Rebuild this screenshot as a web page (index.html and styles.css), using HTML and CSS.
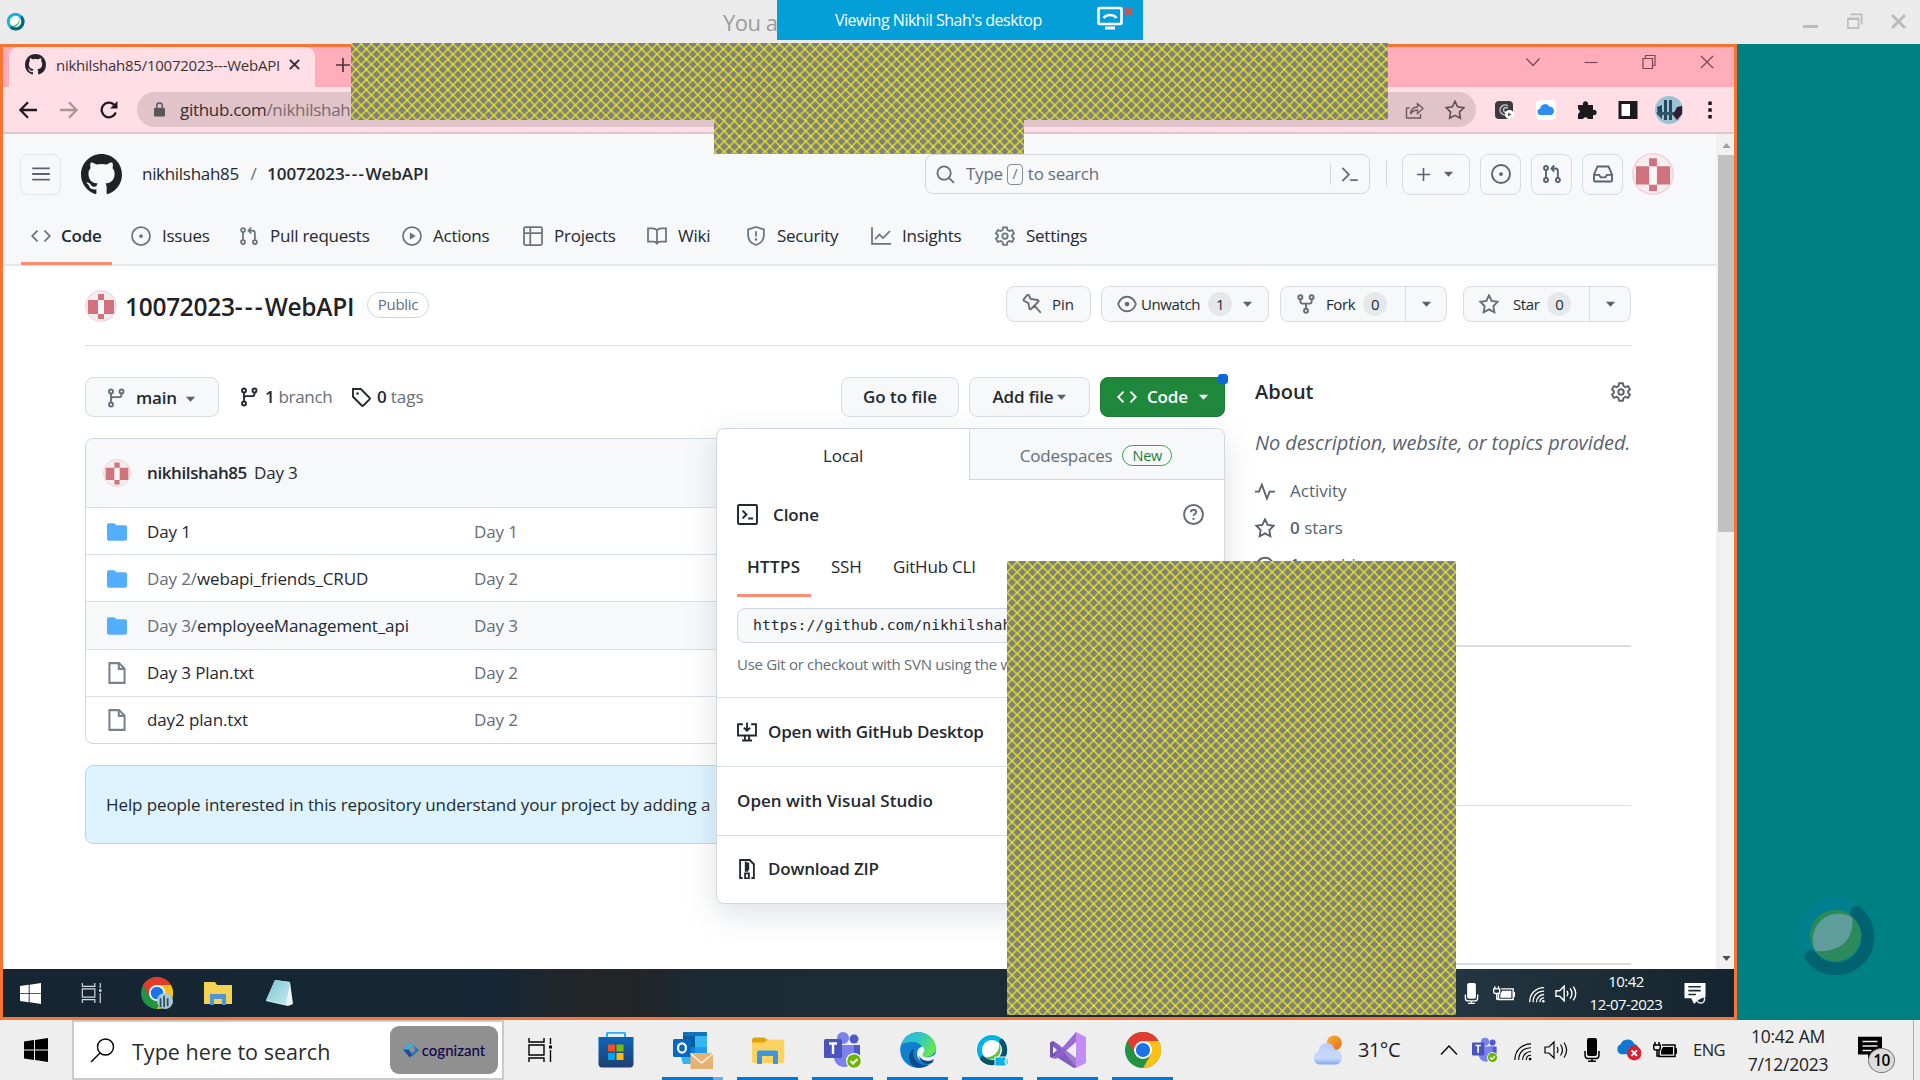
FILE: index.html
```html
<!DOCTYPE html>
<html lang="en">
<head>
<meta charset="utf-8">
<title>Viewing Nikhil Shah's desktop</title>
<link rel="stylesheet" href="styles.css">
</head>
<body>
<svg class="defs" width="0" height="0" aria-hidden="true">
  <defs>
    <pattern id="mesh" x="0" y="1" width="10.2" height="10.2" patternUnits="userSpaceOnUse"><rect width="10.2" height="10.2" fill="#808080"/><path d="M-1-1 11.2 11.2" stroke="#ff0" stroke-opacity=".78" stroke-width="1.45"/><path d="M11.2-1-1 11.2" stroke="#ff0" stroke-opacity=".78" stroke-width="1.45"/></pattern>
    <clipPath id="round"><circle cx="16" cy="16" r="15.5"/></clipPath>
    <linearGradient id="store" x1="0" y1="0" x2="0" y2="1"><stop offset="0" stop-color="#0b66b8"/><stop offset="1" stop-color="#203f72"/></linearGradient>
    <linearGradient id="edge1" x1="0" y1="0" x2="1" y2="0.5"><stop offset="0" stop-color="#2fb4ee"/><stop offset=".55" stop-color="#30c8c0"/><stop offset="1" stop-color="#66e552"/></linearGradient>
    <linearGradient id="cloudg" x1="0" y1="0" x2="0" y2="1"><stop offset="0" stop-color="#b7cdf8"/><stop offset=".7" stop-color="#c9dafb"/><stop offset="1" stop-color="#7fa8ee"/></linearGradient>
    <linearGradient id="sung" x1="0" y1="0" x2="1" y2="1"><stop offset="0" stop-color="#f7b42a"/><stop offset="1" stop-color="#ea6a1c"/></linearGradient>
    <linearGradient id="noteg" x1="0" y1="0" x2="1" y2="1"><stop offset="0" stop-color="#7fc3cf"/><stop offset="1" stop-color="#c4ecf2"/></linearGradient>
  </defs>
  <symbol id="mark" viewBox="0 0 16 16"><path fill="currentColor" d="M8 0c4.42 0 8 3.58 8 8a8.013 8.013 0 0 1-5.45 7.59c-.4.08-.55-.17-.55-.38 0-.27.01-1.13.01-2.2 0-.75-.25-1.23-.54-1.48 1.78-.2 3.65-.88 3.65-3.95 0-.88-.31-1.59-.82-2.15.08-.2.36-1.02-.08-2.12 0 0-.67-.22-2.2.82-.64-.18-1.32-.27-2-.27-.68 0-1.36.09-2 .27-1.53-1.03-2.2-.82-2.2-.82-.44 1.1-.16 1.92-.08 2.12-.51.56-.82 1.28-.82 2.15 0 3.06 1.86 3.75 3.64 3.95-.23.2-.44.55-.51 1.07-.46.21-1.61.55-2.33-.66-.15-.24-.6-.83-1.23-.82-.67.01-.27.38.01.53.34.19.73.9.82 1.13.16.45.68 1.31 2.69.94 0 .67.01 1.3.01 1.49 0 .21-.15.45-.55.38A7.995 7.995 0 0 1 0 8c0-4.42 3.58-8 8-8Z"/></symbol>
  <symbol id="menu" viewBox="0 0 16 16"><path d="M1 3.500h14M1 8h14M1 12.500h14"/></symbol>
  <symbol id="code" viewBox="0 0 16 16"><path d="M10.800 3.700 15 8l-4.200 4.300M5.200 3.700 1 8l4.200 4.300"/></symbol>
  <symbol id="issue" viewBox="0 0 16 16"><circle cx="8" cy="8" r="7.200"/><circle cx="8" cy="8" r="1.500" fill="currentColor" stroke="none"/></symbol>
  <symbol id="pr" viewBox="0 0 16 16"><circle cx="3.200" cy="3.200" r="1.600"/><circle cx="3.200" cy="12.800" r="1.600"/><circle cx="12.700" cy="12.800" r="1.600"/><path d="M3.200 5v6M12.700 11V5.600c0-1.200-.8-2-2-2H8M9.800 1.200 7.500 3.600l2.300 2.400"/></symbol>
  <symbol id="play" viewBox="0 0 16 16"><circle cx="8" cy="8" r="7.200"/><path d="M6.300 5.100 11 8l-4.700 2.900z" fill="currentColor" stroke="none"/></symbol>
  <symbol id="proj" viewBox="0 0 16 16"><rect x=".8" y=".8" width="14.400" height="14.400" rx="1.200"/><path d="M.8 5.600h14.400M5.800.8v14.400"/></symbol>
  <symbol id="wiki" viewBox="0 0 16 16"><path d="M8 3.400C7.200 2.300 6 1.800 4.600 1.800H.8v10.600h4.400c1.200 0 2.100.5 2.800 1.600.7-1.100 1.600-1.600 2.800-1.600h4.400V1.800h-3.800C10 1.800 8.800 2.300 8 3.400V13"/></symbol>
  <symbol id="shield" viewBox="0 0 16 16"><path d="m8 .8 6.300 2v4.500c0 4-2.500 6.500-6.300 7.900C4.200 13.800 1.700 11.300 1.700 7.300V2.800zM8 4.200v4.200"/><circle cx="8" cy="10.800" r="1" fill="currentColor" stroke="none"/></symbol>
  <symbol id="graph" viewBox="0 0 16 16"><path d="M.8 1v13.200H16M3.300 10.600 6.700 6.800l2.900 2.900L15.200 4"/></symbol>
  <symbol id="gear" viewBox="0 0 16 16"><path d="M6.500 1h3l.5 2.200 1.500.9 2.200-.8 1.500 2.600L13.600 7.400v1.200l1.600 1.500-1.500 2.600-2.200-.8-1.500.9L9.500 15h-3L6 12.800l-1.500-.9-2.200.8L.8 10.100l1.600-1.500V7.400L.8 5.900l1.500-2.600 2.200.8L6 3.200z"/><circle cx="8" cy="8" r="2.200"/></symbol>
  <symbol id="search" viewBox="0 0 16 16"><circle cx="6.800" cy="6.800" r="5.600"/><path d="m10.900 10.900 4.200 4.200"/></symbol>
  <symbol id="cmd" viewBox="0 0 16 16"><path d="M2 2.500 7.500 8 2 13.500M8.500 12.800H15"/></symbol>
  <symbol id="plus" viewBox="0 0 16 16"><path d="M8 1.800v12.400M1.800 8h12.400"/></symbol>
  <symbol id="caret" viewBox="0 0 12 8"><path d="M1 1.500h10L6 7z" fill="currentColor" stroke="none"/></symbol>
  <symbol id="inbox" viewBox="0 0 16 16"><path d="M3.600 2h8.800l2.800 6.500V13c0 .6-.4 1-1 1H1.800c-.6 0-1-.4-1-1V8.500zM.8 8.700h4l1.400 2h3.600l1.400-2h4"/></symbol>
  <symbol id="branch" viewBox="0 0 16 16"><circle cx="4" cy="2.800" r="1.600"/><circle cx="4" cy="13.200" r="1.600"/><circle cx="12.400" cy="2.800" r="1.600"/><path d="M4 4.500v7M4 9c0-1.200 1-1.700 2-1.700h4.400c1.200 0 2-.8 2-2v-.8"/></symbol>
  <symbol id="fork" viewBox="0 0 16 16"><circle cx="3.500" cy="2.600" r="1.600"/><circle cx="12.500" cy="2.600" r="1.600"/><circle cx="8" cy="13.400" r="1.600"/><path d="M3.500 4.200V6c0 1 .7 1.700 1.700 1.700h5.600c1 0 1.700-.7 1.700-1.700V4.200M8 7.700v4"/></symbol>
  <symbol id="tag" viewBox="0 0 16 16"><path d="M1.600 1.600h6.200l7 7c.4.400.4.900 0 1.300l-4.900 4.900c-.4.400-.9.400-1.300 0l-7-7z"/><circle cx="5.200" cy="5.200" r="1" fill="currentColor" stroke="none"/></symbol>
  <symbol id="star" viewBox="0 0 16 16"><path d="m8 1 2.100 4.500 4.900.7-3.500 3.500.8 4.900L8 12.300l-4.300 2.300.8-4.900L1 6.200l4.900-.7z"/></symbol>
  <symbol id="pin" viewBox="0 0 16 16"><path d="m5.400.9 1.500 3 5.600.9c.8.200 1 .9.500 1.400L7.300 12c-.6.500-1.300.2-1.400-.5l-.8-4.200-3.600-1.900c-.5-.3-.5-.8-.1-1.200L4.200.8c.4-.4.900-.4 1.200.1zM10 9.300l5 5.700"/></symbol>
  <symbol id="eye" viewBox="0 0 16 16"><path d="M.9 8c1.300-3.600 4-5.800 7.100-5.800s5.800 2.200 7.100 5.800c-1.300 3.600-4 5.800-7.100 5.800S2.200 11.600.9 8z"/><circle cx="8" cy="8" r="1.900" fill="currentColor" stroke="none"/></symbol>
  <symbol id="folder" viewBox="0 0 16 16"><path fill="#54aeff" d="M1.600 1h3.800c.5 0 .9.200 1.200.6l.9 1h6.900c.9 0 1.600.7 1.600 1.600v9.200c0 .9-.7 1.600-1.600 1.600H1.600C.7 15 0 14.300 0 13.400V2.600C0 1.700.7 1 1.600 1z"/></symbol>
  <symbol id="file" viewBox="0 0 16 16"><path d="M2.500.8h7l4 4v10.400h-11zM9.300 1v4h4"/></symbol>
  <symbol id="term" viewBox="0 0 16 16"><rect x=".8" y=".8" width="14.400" height="14.400" rx=".8"/><path d="m4.300 5 2.900 3-2.900 3M8.500 11h3.800"/></symbol>
  <symbol id="help" viewBox="0 0 16 16"><circle cx="8" cy="8" r="7.200"/><path d="M6 6.300c.1-1.200 1-1.900 2-1.900 1.200 0 2 .8 2 1.800 0 1.300-2 1.500-2 2.800"/><circle cx="8" cy="11.300" r=".9" fill="currentColor" stroke="none"/></symbol>
  <symbol id="desk" viewBox="0 0 16 16"><path d="M4.700 1.800H.8v9h14.400v-9h-3.900M8 .3v6.400M5.500 4.600 8 7l2.500-2.400M6.300 11v3.500M9.700 11v3.500M4 14.800h8"/></symbol>
  <symbol id="zip" viewBox="0 0 16 16"><path d="M4.500 15.200h-2V.8h7.600l3.400 3.400v11h-2"/><path d="M7 2v1.500h2V5H7v1.500h2V8H7v1.500h2M6.500 15.500v-4h3v4z"/></symbol>
  <symbol id="pulse" viewBox="0 0 16 16"><path d="M0 8.500h3.200L5.500 3l4 11 2.300-5.500H16"/></symbol>
  <symbol id="avatar" viewBox="0 0 32 32"><g clip-path="url(#round)"><rect width="32" height="32" fill="#f5eef0"/><path d="M13 4h6v6h-6zM3 10h10v14H3zM19 10h10v14H19zM13 24h6v5h-6z" fill="#d0737c"/><path d="M13.500 11h5v13h-5z" fill="#f8f6f7"/></g><circle cx="16" cy="16" r="15.400" fill="none" stroke="#f3ccd2" stroke-width="1"/></symbol>
  <symbol id="winflag" viewBox="0 0 24 24"><path fill="currentColor" d="M0 3.400 10 2v9.400H0zM11 1.900 24 0v11.400H11zM0 12.400h10V22L0 20.600zM11 12.400h13V24l-13-1.900z"/></symbol>
  <symbol id="taskview" viewBox="0 0 24 24"><path d="M1 0v4h15V0M1 24v-4h15v4M1 7h15v10H1zM22.500 0v6M22.500 12v12" fill="none" stroke="currentColor" stroke-width="1.400"/><path d="M21 7.500h3v3h-3z" fill="currentColor"/></symbol>
  <symbol id="wifi" viewBox="0 0 20 20"><path d="M2 19C2 9 9 2 19 2M6 19c0-8 5-13 13-13M10 19c0-5 4-9 9-9M14 19c0-3 2-5 5-5"/><circle cx="18" cy="18" r="1.500" fill="currentColor" stroke="none"/></symbol>
  <symbol id="sound" viewBox="0 0 24 20"><path d="M1 7v6h4l5 5V2L5 7zM13 7c1.300 2 1.300 4 0 6M16.500 4.500c2.500 3.500 2.500 7.500 0 11M20 2.500c3.500 5 3.500 10 0 15"/></symbol>
  <symbol id="mic" viewBox="0 0 16 24"><rect x="3" y="0" width="10" height="18" rx="2" fill="currentColor" stroke="none"/><path d="M1 13v4c0 2 1 3.500 3 3.500h8c2 0 3-1.500 3-3.500v-4M8 20v3M4 23.300h8"/></symbol>
  <symbol id="battery" viewBox="0 0 24 18"><path d="M6 9v6.500h16V4H9M22 8h1.500v4H22M2 1v3M6 1v3M.7 4h6.600v3c0 1-1 2-2 2H3C1.700 9 .7 8 .7 7zM4 9v6h3"/><path d="M10 6h10v7.500H8V9.500z" fill="currentColor" stroke="none"/></symbol>
  <symbol id="note" viewBox="0 0 24 24"><path fill="currentColor" d="M0 0h24v18h-9l-5 6v-6H0z"/></symbol>
  <symbol id="chrome" viewBox="0 0 36 36"><circle cx="18" cy="18" r="18" fill="#229342"/><path fill="#fbc116" d="M18 36A18 18 0 0 0 33.600 9H18l7.800 13.500z"/><path fill="#e33b2e" d="M33.600 9A18 18 0 0 0 2.400 9l7.800 13.500L18 9z"/><circle cx="18" cy="18" r="9" fill="#fff"/><circle cx="18" cy="18" r="7.100" fill="#1a73e8"/></symbol>
  <symbol id="teams" viewBox="0 0 38 38"><circle cx="19" cy="7" r="6" fill="#7b83eb"/><circle cx="30" cy="8" r="4.500" fill="#5059c9"/><path fill="#5059c9" d="M25 14h11v10c0 5-5 7-9 6z"/><path fill="#7b83eb" d="M10 14h20v12c0 7-5 10-10 10S10 32 10 26z"/><rect y="8" width="18" height="19" rx="1.500" fill="#4b53bc"/><path d="M5 12.500h8M9 12.500V23" stroke="#fff" stroke-width="2.400"/><circle cx="30" cy="30" r="8" fill="#fff"/><circle cx="30" cy="30" r="6.800" fill="#6bb700"/><path d="m26.500 30 2.500 2.500 4.500-4.500" fill="none" stroke="#fff" stroke-width="2"/></symbol>
</svg>

<header class="titlebar">
  <svg class="webex-mini" viewBox="0 0 20 20"><circle cx="10" cy="10" r="7.600" fill="#fff" stroke="#18b4df" stroke-width="3.200"/><path d="M13.500 5.500c1 6-3 9-8 9 5 4 11-3 8-9z" fill="#6cbf4b"/><path d="M15.800 5A7.600 7.600 0 0 1 5 15.700" fill="none" stroke="#07637e" stroke-width="3.200"/></svg>
  <span class="you">You a</span>
  <div class="winctl">
    <svg viewBox="0 0 16 20"><path d="M0 15.500h15" stroke-width="3"/></svg>
    <svg viewBox="0 0 18 20"><path d="M1 7h12v11H1zM1 8h12" stroke-width="1.800"/><path d="M4 2.500h12.500V14" stroke-width="2"/></svg>
    <svg viewBox="0 0 16 20"><path d="m1 4 13 13M14 4 1 17" stroke-width="3"/></svg>
  </div>
</header>

<main class="stage">
  <section class="share">
    <div class="tabstrip">
      <div class="tab"><svg class="fav"><use href="#mark"/></svg><span class="tabname">nikhilshah85/10072023---WebAPI</span><svg class="ic tabx" viewBox="0 0 10 10"><path d="m.8.8 8.400 8.400M9.200.8.800 9.200"/></svg></div>
      <svg class="ic newtab" viewBox="0 0 16 16"><path d="M8 1v14M1 8h14"/></svg>
      <div class="chromectl">
        <svg viewBox="0 0 14 14"><path d="m.5 3.500 6.500 7 6.500-7"/></svg>
        <svg viewBox="0 0 14 14"><path d="M.5 7.500h13"/></svg>
        <svg viewBox="0 0 14 14"><path d="M1 3.500h9.500v10H1zM3.500 3.500v-3H13v10h-2.500"/></svg>
        <svg viewBox="0 0 14 14"><path d="m1 1 12 12M13 1 1 13"/></svg>
      </div>
    </div>
    <div class="toolbar">
      <svg class="ic t1" viewBox="0 0 18 18"><path d="M18 9H1.500M9 1.200 1.400 9 9 16.800"/></svg>
      <svg class="ic t2" viewBox="0 0 18 18"><path d="M0 9h16.500M9 1.200 16.600 9 9 16.800"/></svg>
      <svg class="ic t3" viewBox="0 0 18 18"><path d="M15.800 11.500A7.300 7.300 0 1 1 14 3.700l2 2"/><path d="M17.500 0v7.500H10z" fill="currentColor" stroke="none"/></svg>
      <div class="omni">
        <svg class="lock" viewBox="0 0 12 16"><rect y="6" width="12" height="9.500" rx="1" fill="#5b5458"/><path d="M3 6V4a3 3 0 0 1 6 0v2" fill="none" stroke="#5b5458" stroke-width="1.600"/></svg>
        <span class="url">github.com<i>/nikhilshah</i></span>
        <svg class="ic share-ic" viewBox="0 0 18 18"><path d="M4 7H1v10h14v-4M5 13c.5-5 3-7 7-7V2.500l5.500 5-5.500 5V9C9 9 7 10 5 13z"/></svg>
        <svg class="ic star-ic"><use href="#star"/></svg>
      </div>
      <div class="exts">
        <svg viewBox="0 0 20 20"><rect x="0" y="1" width="18" height="18" rx="4" fill="#3b3a3c"/><path d="M13 6a5 5 0 1 0 0 8M13 8.500a2.500 2.500 0 1 0 0 3" fill="none" stroke="#c9c2c5" stroke-width="1.500"/><circle cx="14.500" cy="14.500" r="4.500" fill="#fff"/><path d="M13 12.500v4l3.500-2z" fill="#555"/></svg>
        <svg viewBox="0 0 20 20"><rect width="20" height="20" rx="4" fill="#fbfcff"/><path d="M4.500 15a3.300 3.300 0 0 1-.3-6.500 5 5 0 0 1 9.400-1.700A4.200 4.200 0 0 1 15 15z" fill="#2d8cf0"/></svg>
        <svg viewBox="0 0 20 20"><path d="M1 5h5a2.700 2.700 0 1 1 5 0h5v5a2.700 2.700 0 1 1 0 5v4h-5a2.700 2.700 0 0 0-5 0H1v-5a2.700 2.700 0 0 0 0-5z" fill="#1c1a1c"/></svg>
        <svg viewBox="0 0 20 20"><path d="M2 2.500h16v15H2z" fill="#fff" stroke="#1c1a1c" stroke-width="3"/><path d="M12 2h6v16h-6z" fill="#1c1a1c"/></svg>
        <svg class="person" viewBox="0 0 28 28"><circle cx="14" cy="14" r="14" fill="#9cc3d4"/><path d="M2 11 7 9v14l-4-4zM9 4h3v20H9zM14 4h3v20h-3z" fill="#26485e"/><path d="M1.500 16h20v3h-19z" fill="#31566b"/><path d="M27 10v8l-5 6-4-5 4-8z" fill="#351a30"/></svg>
        <svg viewBox="0 0 20 20"><path d="M8.300 1.500h3.500V5H8.300zM8.300 8.200h3.500v3.500H8.300zM8.300 15h3.500v3.500H8.300z" fill="#1c1a1c"/></svg>
      </div>
    </div>

    <div class="viewport">
      <div class="page">
        <div class="ghhead">
          <div class="globalbar">
            <span class="sq"><svg class="ic"><use href="#menu"/></svg></span>
            <svg class="logo"><use href="#mark"/></svg>
            <span class="owner">nikhilshah85</span><span class="slash">/</span><b class="reponame">10072023<i class="hy">---</i>WebAPI</b>
            <div class="searchbox"><svg class="ic"><use href="#search"/></svg><span>Type</span><kbd>/</kbd><span>to search</span><span class="cmdk"><svg class="ic"><use href="#cmd"/></svg></span></div>
            <span class="vbar"></span>
            <span class="sq wide"><svg class="ic small"><use href="#plus"/></svg><svg class="caret"><use href="#caret"/></svg></span>
            <span class="sq"><svg class="ic"><use href="#issue"/></svg></span>
            <span class="sq"><svg class="ic"><use href="#pr"/></svg></span>
            <span class="sq"><svg class="ic"><use href="#inbox"/></svg></span>
            <svg class="me"><use href="#avatar"/></svg>
          </div>
          <nav class="tabs">
            <a class="on"><svg class="ic"><use href="#code"/></svg>Code</a>
            <a><svg class="ic"><use href="#issue"/></svg>Issues</a>
            <a><svg class="ic"><use href="#pr"/></svg>Pull requests</a>
            <a><svg class="ic"><use href="#play"/></svg>Actions</a>
            <a><svg class="ic"><use href="#proj"/></svg>Projects</a>
            <a><svg class="ic"><use href="#wiki"/></svg>Wiki</a>
            <a><svg class="ic"><use href="#shield"/></svg>Security</a>
            <a><svg class="ic"><use href="#graph"/></svg>Insights</a>
            <a><svg class="ic"><use href="#gear"/></svg>Settings</a>
          </nav>
        </div>

        <div class="repo">
          <div class="titlerow">
            <svg class="ava"><use href="#avatar"/></svg><h1>10072023<i class="hy">---</i>WebAPI</h1><span class="pill">Public</span>
            <div class="social">
              <span class="btn pinb"><svg class="ic"><use href="#pin"/></svg>Pin</span>
              <span class="btn watch"><svg class="ic"><use href="#eye"/></svg>Unwatch<em>1</em><svg class="caret"><use href="#caret"/></svg></span>
              <span class="btn forkb"><svg class="ic"><use href="#fork"/></svg>Fork<em>0</em><u><svg class="caret"><use href="#caret"/></svg></u></span>
              <span class="btn starb"><svg class="ic"><use href="#star"/></svg>Star<em>0</em><u><svg class="caret"><use href="#caret"/></svg></u></span>
            </div>
          </div>
          <div class="cols">
            <div class="left">
              <div class="actions">
                <span class="btn mainb"><svg class="ic"><use href="#branch"/></svg>main<svg class="caret"><use href="#caret"/></svg></span>
                <span class="stat branches"><svg class="ic"><use href="#branch"/></svg><b>1</b>branch</span>
                <span class="stat tags"><svg class="ic"><use href="#tag"/></svg><b>0</b>tags</span>
                <div class="right">
                  <span class="btn gof">Go to file</span>
                  <span class="btn addf">Add file<svg class="caret"><use href="#caret"/></svg></span>
                  <span class="btn green"><svg class="ic"><use href="#code"/></svg>Code<svg class="caret"><use href="#caret"/></svg><i class="dot"></i></span>
                </div>
              </div>
              <div class="files">
                <div class="commit"><svg class="cav"><use href="#avatar"/></svg><b>nikhilshah85</b><span>Day 3</span></div>
                <div class="row"><svg><use href="#folder"/></svg><span>Day 1</span><span class="msg">Day 1</span></div>
                <div class="row"><svg><use href="#folder"/></svg><span><i>Day 2/</i>webapi_friends_CRUD</span><span class="msg">Day 2</span></div>
                <div class="row hov"><svg><use href="#folder"/></svg><span><i>Day 3/</i>employeeManagement_api</span><span class="msg">Day 3</span></div>
                <div class="row"><svg class="ic"><use href="#file"/></svg><span>Day 3 Plan.txt</span><span class="msg">Day 2</span></div>
                <div class="row"><svg class="ic"><use href="#file"/></svg><span>day2 plan.txt</span><span class="msg">Day 2</span></div>
              </div>
              <div class="help"><span>Help people interested in this repository understand your project by adding a README.</span></div>
            </div>
            <aside class="about">
              <div class="ahead"><h2>About</h2><svg class="ic"><use href="#gear"/></svg></div>
              <p>No description, website, or topics provided.</p>
              <div class="aitem"><svg class="ic"><use href="#pulse"/></svg><span>Activity</span></div>
              <div class="aitem"><svg class="ic"><use href="#star"/></svg><span><b>0</b> stars</span></div>
              <div class="aitem"><svg class="ic"><use href="#eye"/></svg><span><b>1</b> watching</span></div>
              <div class="rule r1"></div><div class="rule r2"></div><div class="rule r3"></div>
            </aside>
          </div>
        </div>

        <div class="popover">
          <div class="ptabs"><span class="local">Local</span><span class="spaces">Codespaces<em>New</em></span></div>
          <div class="clone">
            <div class="chead"><svg class="ic dark"><use href="#term"/></svg><b>Clone</b><svg class="ic q"><use href="#help"/></svg></div>
            <div class="proto"><b>HTTPS</b><span>SSH</span><span>GitHub CLI</span></div>
            <div class="cloneurl"><span>https://github.com/nikhilshah85</span></div>
            <div class="hint">Use Git or checkout with SVN using the web URL.</div>
          </div>
          <div class="pitem"><svg class="ic"><use href="#desk"/></svg><b>Open with GitHub Desktop</b></div>
          <div class="pitem vs"><b>Open with Visual Studio</b></div>
          <div class="pitem"><svg class="ic"><use href="#zip"/></svg><b>Download ZIP</b></div>
        </div>
      </div>
      <div class="scroll"><svg viewBox="0 0 10 6"><path d="M0 6 5 0l5 6z" fill="#a0a0a0"/></svg><div class="thumb"></div><svg viewBox="0 0 10 6"><path d="m0 0 5 6 5-6z" fill="#505050"/></svg></div>
    </div>

    <div class="rtask">
      <svg class="rw" viewBox="0 0 24 24"><use href="#winflag"/></svg>
      <svg class="rv"><use href="#taskview"/></svg>
      <svg class="rc" viewBox="0 0 36 36"><use href="#chrome"/><circle cx="27" cy="27" r="9" fill="#a9cbd6"/><path d="M21 24h2v10h-2zM25 21h2v13h-2zM29 24h2v9h-2z" fill="#2d4c60"/></svg>
      <svg class="rf" viewBox="0 0 28 24"><path d="M0 1h11l2 3h15v19H0z" fill="#f6d253"/><path d="M6 13h16v11h-4v-6h-8v6H6z" fill="#4f94d4"/></svg>
      <svg class="rn" viewBox="0 0 28 28"><path d="m9 1 15 2 3 22-5 2L0 22z" fill="#eef6f7"/><path d="m9 1 15 2-4 23L0 21z" fill="url(#noteg)"/></svg>
      <div class="rtray">
        <svg class="ic m"><use href="#mic"/></svg>
        <svg class="ic b"><use href="#battery"/></svg>
        <svg class="ic w"><use href="#wifi"/></svg>
        <svg class="ic s"><use href="#sound"/></svg>
        <span class="rclock">10:42<br>12-07-2023</span>
        <svg class="rnote" viewBox="0 0 22 22"><path fill="#fff" d="M0 0h22v15h-2l-6 3-4 4-3-6H0z"/><path d="M4 4h13M4 8h13M4 12h8" stroke="#1b2c37" stroke-width="1.600"/><circle cx="17" cy="17" r="4" fill="none" stroke="#e8eef0" stroke-width="1.500"/></svg>
      </div>
    </div>
  </section>
  <aside class="teal">
    <svg viewBox="0 0 80 80"><circle cx="40" cy="40" r="39" fill="#00808f"/><circle cx="40" cy="40" r="26" fill="#2b8a5b"/><path d="M57 22C59 44 46 57 20 56A26 26 0 0 1 57 22z" fill="#5f9c9c"/><path d="M61.500 16.500A32.500 32.500 0 1 1 15 61.500" fill="none" stroke="#00636f" stroke-width="13" stroke-linecap="round"/></svg>
  </aside>
</main>

<footer class="taskbar">
  <svg class="w"><use href="#winflag"/></svg>
  <div class="tsearch"><svg viewBox="0 0 25 25"><circle cx="15.500" cy="9" r="8"/><path d="M10 15 1 24"/></svg><span>Type here to search</span>
    <div class="cog"><svg viewBox="0 0 18 16"><path d="M7 0 0 7.500 7 16l3-3-4-5.500L11 3z" fill="#1b4f9c"/><path d="m7 0 4 3-5 4.500L0 7.500z" fill="#3fb2dc"/><path d="m11 3 6 5-7 7-1-3 4-4z" fill="#2577b8"/></svg><span>cognizant</span></div>
  </div>
  <svg class="tv"><use href="#taskview"/></svg>
  <div class="apps">
    <span class="app noline"><svg viewBox="0 0 36 36"><path d="M9 7V2c0-.8.500-1.300 1.300-1.300h15.400c.8 0 1.300.5 1.300 1.300v5" fill="none" stroke="#28b1ea" stroke-width="2"/><path d="M.5 5h35v27c0 2-1.500 3.500-3.500 3.500H4C2 35.500.5 34 .5 32z" fill="url(#store)"/><path d="M10 12.500h7v7h-7z" fill="#f25022"/><path d="M18.500 12.500h7v7h-7z" fill="#7fba00"/><path d="M10 21h7v7h-7z" fill="#00a4ef"/><path d="M18.500 21h7v7h-7z" fill="#ffb900"/></svg></span>
    <span class="app outlook"><svg viewBox="0 0 40 38"><path d="M10 1h24v32H10z" fill="#1172bd"/><path d="M10 5h12v11H10z" fill="#0a5ba0"/><path d="M22 5h12v11H22z" fill="#36b6f0"/><path d="M10 16h12v9H10z" fill="#1082d6"/><path d="M22 16h12v9H22z" fill="#1e9be6"/><path d="M8 26h10v7H10z" fill="#35b4ee"/><rect y="8" width="18" height="18" rx="1.500" fill="#0669bd"/><ellipse cx="9" cy="17" rx="4" ry="4.600" fill="none" stroke="#fff" stroke-width="2.200"/><path d="M17.500 22h22.500v16H17.500z" fill="#e8b372"/><path d="m17.500 22.500 11.200 9.500L40 22.500" fill="none" stroke="#fff" stroke-width="1.300"/></svg></span>
    <span class="app"><svg viewBox="0 0 36 36"><path d="M2 8c0-1.500 1-2.500 2.500-2.500H14L18 8v4H2z" fill="#e3a10c"/><path d="M2 10.500h12l4-3h14c1.300 0 2.300 1 2.300 2.300V29c0 1.300-1 2-2.300 2H4.300C3 31 2 30.300 2 29z" fill="#ffd35f"/><path d="M7 20.500c0-1.300.8-2 2-2h17c1.200 0 2 .7 2 2V32h-5v-8H12v8H7z" fill="#3e97de"/></svg></span>
    <span class="app"><svg class="big"><use href="#teams"/></svg></span>
    <span class="app"><svg viewBox="0 0 36 36"><circle cx="18" cy="18" r="17.800" fill="#0f7fd0"/><path d="M1 13C4 4 11 .2 18 .2 29 .2 36 8 35.800 16c-.2 6-5 9-10 9-4 0-5-1.500-3.500-3.500C25 17 21 10 13 10 8 10 3.500 11 1 13z" fill="url(#edge1)"/><path d="M14 17c-3 8 3 16 12 16 3 0 5-1 7-3-4 4-9 6-15 5.800C12 35 9 30 9 25c0-4 2-7 5-8z" fill="#114a8b"/><path d="M22.500 14.500c3 3 1.500 6 .2 7.500-1.200 2.800 4.300 4.500 9.800 2L36 22v8l-7 .5c-6 1-12-3-12-9 0-3 2-6 5.500-7z" fill="#eee"/><path d="M19 24c3 5 10 6.500 15 3l-1.500 3.500C27 34 20 31 19 24z" fill="#114a8b"/></svg></span>
    <span class="app"><svg viewBox="0 0 36 36"><circle cx="17" cy="18" r="15.800" fill="#fff"/><circle cx="17" cy="18" r="12.600" fill="#fff" stroke="#00b5e6" stroke-width="5"/><path d="M24 10c1.500 9-4 15-14 15.500 8 6 20-2 14-15.500z" fill="#68bd48"/><path d="M26.500 9.500A12.600 12.600 0 0 1 7.500 26.500" fill="none" stroke="#07536e" stroke-width="5" stroke-linecap="round"/><path d="M20 25h11v9H20zM30 28l3-2v7l-3-2z" fill="#00b5e6" stroke="#e8f7fb" stroke-width="1"/></svg></span>
    <span class="app"><svg viewBox="0 0 36 36"><path d="M0 10.500 3 9l5 3.500L26 35l-2 1L5 24l-2 2.500L0 25zM3 14.500v7L7 18z" fill="#7252aa" fill-rule="evenodd"/><path d="m26 0 10 5v26l-10 5z" fill="#c48cf5"/><path d="M26 0v10L8 26l-3 1-4-2L5 24z" fill="#9b6bd3"/><path d="M26 36V26L8 12 3 9l2 15z" fill="#8860c8" opacity=".8"/><path d="M3 14.500v7L7 18zM26 11l-9 7 9 7z" fill="#eee"/></svg></span>
    <span class="app"><svg><use href="#chrome"/></svg></span>
  </div>
  <div class="tray">
    <svg class="weather" viewBox="0 0 36 36"><circle cx="25.500" cy="9.500" r="9" fill="url(#sung)"/><path d="M7.500 35.500a7.500 8 0 0 1-1-15.600 10 11 0 0 1 19.500-2.900A9.200 9.400 0 0 1 28 35.500z" fill="url(#cloudg)"/></svg>
    <span class="temp">31°C</span>
    <svg class="ic chev" viewBox="0 0 18 10"><path d="m1 9.500 8-8.500 8 8.500"/></svg>
    <svg class="tt"><use href="#teams"/></svg>
    <svg class="ic wf"><use href="#wifi"/></svg>
    <svg class="ic sd"><use href="#sound"/></svg>
    <svg class="ic mc"><use href="#mic"/></svg>
    <svg class="cl" viewBox="0 0 24 20"><path d="M5 14a5 5 0 0 1-.5-9.500A7 7 0 0 1 17.500 4 5.500 5.500 0 0 1 19 14z" fill="#0f78d4"/><circle cx="17.500" cy="13" r="7" fill="#d9202e"/><path d="m14.800 10.300 5.400 5.400M20.200 10.300l-5.400 5.400" stroke="#fff" stroke-width="1.800"/></svg>
    <svg class="ic bt"><use href="#battery"/></svg>
    <span class="eng">ENG</span>
    <span class="clock">10:42 AM<br>7/12/2023</span>
    <span class="notif"><svg viewBox="0 0 24 24"><use href="#note"/><path d="M4.500 5h15M4.500 9.500h15M4.500 14h9" stroke="#eee" stroke-width="1.500"/></svg><i>10</i></span>
    <span class="edge"></span>
  </div>
</footer>

<div class="banner"><span>Viewing Nikhil Shah's desktop</span>
  <svg viewBox="0 0 36 26"><rect x="1.500" y="2" width="23" height="16" rx="1" fill="none" stroke="#fff" stroke-width="2.600"/><path d="M6.500 12c3-4 10-4 13 0" fill="none" stroke="#fff" stroke-width="2.600"/><path d="M8 22h10" stroke="#fff" stroke-width="3"/><path d="m28 2 7 7M35 2l-7 7" stroke="#dc4a4a" stroke-width="2.800"/></svg>
</div>
<svg class="mesh m1"><rect width="100%" height="100%" fill="url(#mesh)"/></svg>
<svg class="mesh m2"><rect width="100%" height="100%" fill="url(#mesh)"/></svg>
<svg class="mesh m3"><rect width="100%" height="100%" fill="url(#mesh)"/></svg>
</body>
</html>
```
FILE: styles.css
```css
* { box-sizing: border-box; margin: 0; padding: 0; }
body { width: 1920px; height: 1080px; overflow: hidden; display: flex; flex-direction: column; font: 17px/24px "Open Sans", "Noto Sans", sans-serif; color: #24292f; background: #eee; }
svg { display: block; flex: none; }
.defs { position: absolute; }
span, b { white-space: nowrap; }
i, em { font-style: normal; }
u { text-decoration: none; }
.hy { letter-spacing: 1.4px; }
.ic { fill: none; stroke: currentColor; stroke-width: 1.5; width: 20px; height: 20px; }
.caret { width: 11px; height: 8px; }

.titlebar { height: 44px; flex: none; background: #ebebeb; display: flex; align-items: center; }
.webex-mini { width: 19px; height: 19px; margin-left: 6px; margin-top: -2px; }
.you { margin-left: 698px; font-size: 22px; color: #9c9c9c; line-height: 34px; letter-spacing: -.5px; margin-top: -1px; }
.winctl { margin-left: auto; display: flex; gap: 28px; padding: 0 13px 2px 0; }
.winctl svg { width: 16px; height: 20px; fill: none; stroke: #bcbcbc; }

.stage { height: 976px; flex: none; display: flex; }
.share { width: 1737px; border: 3px solid #f97432; display: flex; flex-direction: column; background: #fff; }
.teal { flex: 1; background: #008080; display: flex; align-items: flex-end; padding: 0 0 45px 59px; }
.teal svg { width: 79px; height: 79px; }

.tabstrip { height: 40px; background: #ffacbb; display: flex; align-items: center; flex: none; }
.tab { margin-left: 6px; width: 306px; height: 100%; background: #ffdfe5; border-radius: 9px 9px 0 0; display: flex; align-items: center; padding-left: 16px; padding-bottom: 5px; }
.fav { width: 21px; height: 21px; color: #24222a; }
.tabname { font-size: 15px; margin-left: 10px; width: 232px; letter-spacing: -.25px; color: #3a3136; }
.tabx { width: 11px; height: 11px; stroke-width: 1.9; color: #3a3136; margin-left: 1px; }
.newtab { margin-left: 20px; width: 16px; height: 16px; stroke-width: 1.7; color: #4c363c; margin-top: -4px; }
.chromectl { margin-left: auto; display: flex; gap: 44px; padding: 0 20px 11px 0; }
.chromectl svg { width: 14px; height: 14px; fill: none; stroke: #7c4654; stroke-width: 1.2; }

.toolbar { height: 47px; background: #ffdfe5; border-bottom: 2px solid #e2c4ca; display: flex; align-items: center; flex: none; }
.toolbar .ic { width: 18px; height: 18px; stroke-width: 2.3; color: #1f1b1e; }
.toolbar .t1 { margin-left: 16px; }
.toolbar .t2 { margin-left: 23px; color: #a8939a; }
.toolbar .t3 { margin-left: 22px; }
.omni { margin-left: 19px; width: 1339px; height: 35px; border-radius: 18px; background: #e0c4ca; display: flex; align-items: center; }
.lock { width: 11px; height: 15px; margin-left: 17px; }
.url { margin-left: 15px; font-size: 17px; color: #362f33; letter-spacing: -.3px; width: 1075px; }
.url i { color: #7b6b71; }
.omni .share-ic { margin-left: 150px; width: 19px; height: 18px; stroke-width: 1.4; color: #6b5c61; }
.omni .star-ic { margin-left: 21px; width: 20px; height: 20px; stroke-width: 1.3; color: #5d5054; }
.exts { display: flex; align-items: center; margin-left: 19px; gap: 21px; }
.exts svg { width: 20px; height: 20px; }
.exts .person { width: 28px; height: 28px; margin: 0 -4px; }

.viewport { height: 835px; display: flex; flex: none; }
.page { width: 1713px; position: relative; background: #fff; overflow: hidden; }
.scroll { width: 18px; background: #f1f1f1; display: flex; flex-direction: column; align-items: center; padding: 9px 0 8px 2px; }
.scroll svg { width: 9px; height: 5px; }
.scroll .thumb { width: 16px; height: 377px; background: #c1c1c1; margin: 7px 0 auto; }

.ghhead { height: 132px; background: #f6f8fa; border-bottom: 2px solid #e3e7ec; }
.globalbar { height: 80px; padding: 0 0 0 17px; display: flex; align-items: center; color: #59636e; }
.sq { width: 41px; height: 41px; border: 1.5px solid #d5dbe2; border-radius: 8px; display: flex; align-items: center; justify-content: center; margin-right: 10px; }
.sq.wide { width: 68px; gap: 11px; padding-right: 3px; }
.sq .small { width: 17px; height: 17px; }
.logo { width: 41px; height: 41px; color: #1f2328; margin: 0 20px 0 10px; }
.sq:first-child { margin-right: 10px; border-color: #e2e6ea; }
.globalbar .owner { width: 98px; color: #24292f; letter-spacing: -.3px; }
.slash { width: 27px; text-align: center; color: #656d76; }
.reponame { font-weight: 600; color: #24292f; width: 164px; letter-spacing: 0; }
.searchbox { margin-left: 494px; width: 445px; height: 40px; border: 1.5px solid #d0d7de; border-radius: 8px; display: flex; align-items: center; padding-left: 10px; color: #656d76; letter-spacing: -.25px; }
.searchbox .ic { width: 19px; height: 19px; margin-right: 11px; }
.searchbox kbd { width: 16px; height: 21px; border: 1.5px solid #858d96; border-radius: 4px; margin: 0 5px 0 4px; font: 14px/17px "Open Sans", sans-serif; text-align: center; }
.cmdk { margin-left: auto; border-left: 1px solid #d0d7de; height: 22px; display: flex; align-items: center; padding-left: 9px; }
.searchbox .cmdk .ic { margin-right: 10px; }
.vbar { width: 1px; height: 26px; background: #d0d7de; margin: 0 15px 0 16px; }
.me { width: 42px; height: 42px; margin-left: -1px; }
.tabs { height: 51px; margin-left: 18px; display: grid; grid-template-columns: 100px 108px 163px 121px 124px 99px 125px 124px 120px; color: #59636e; }
.tabs a { display: flex; align-items: center; gap: 11px; color: #24292f; white-space: nowrap; letter-spacing: -.25px; padding-left: 10px; padding-bottom: 7px; }
.tabs a .ic { color: #6a737d; width: 20px; height: 20px; stroke-width: 1.4; }
.tabs .on { width: 91px; font-weight: 600; border-bottom: 3px solid #fd8c73; padding-bottom: 4px; gap: 10px; }

.repo { padding-left: 82px; width: 1628px; }
.titlerow { height: 80px; border-bottom: 1.5px solid #d8dee4; display: flex; align-items: center; }
.ava { width: 32px; height: 32px; }
h1 { font-size: 24.5px; font-weight: 600; line-height: 32px; margin-left: 8px; width: 242px; white-space: nowrap; color: #1f2328; letter-spacing: -.3px; padding-top: 2px; }
h1 .hy { letter-spacing: 2.1px; }
.pill { border: 1.5px solid #d0d7de; border-radius: 14px; width: 62px; height: 26px; font-size: 15px; line-height: 23px; text-align: center; color: #656d76; letter-spacing: -.3px; margin-top: -1px; }
.social { margin-left: auto; display: flex; align-items: center; margin-top: -3px; }
.btn { display: flex; align-items: center; border: 1.5px solid #d8dde2; border-radius: 8px; background: #f6f8fa; height: 40px; font-weight: 600; letter-spacing: -.15px; color: #24292f; }
.btn .ic { color: #656d76; }
.btn .caret { color: #57606a; }
.social .btn { height: 36px; font-size: 15px; font-weight: 500; letter-spacing: -.4px; padding-left: 15px; }
.social .btn .ic { width: 20px; height: 20px; }
.social em { background: #e5e8eb; border-radius: 14px; min-width: 24px; height: 24px; line-height: 24px; text-align: center; margin-left: 8px; }
.social .btn.pinb { width: 85px; margin-right: 10px; gap: 10px; letter-spacing: 0; }
.watch { width: 168px; margin-right: 11px; }
.watch .ic { margin-right: 4px; }
.watch .caret { margin-left: 10px; }
.forkb, .starb { width: 167px; margin-right: 16px; }
.starb { width: 168px; margin-right: 0; }
.forkb .ic { margin-right: 10px; }
.starb .ic { margin-right: 14px; }
.social u { margin-left: auto; width: 41px; height: 100%; border-left: 1px solid #d8dde2; display: flex; align-items: center; justify-content: center; }

.cols { display: flex; }
.left { width: 1140px; padding-top: 31px; }
.actions { display: flex; align-items: center; height: 40px; }
.mainb { width: 134px; padding-left: 20px; gap: 10px; padding-top: 1px; }
.mainb .caret { margin-left: -2px; margin-top: 2px; }
.stat { display: flex; align-items: center; color: #656d76; letter-spacing: -.3px; }
.stat .ic { color: #24292f; width: 20px; height: 20px; }
.stat b { color: #24292f; font-weight: 600; margin: 0 4px 0 6px; }
.branches { margin-left: 20px; width: 112px; }
.tags { letter-spacing: 0; }
.right { margin-left: auto; display: flex; gap: 10px; }
.gof { width: 118px; justify-content: center; letter-spacing: 0; }
.addf { width: 121px; justify-content: center; gap: 2px; }
.green { width: 125px; background: #1f883d; border-color: #1b7a36; color: #fff; padding-left: 16px; gap: 10px; position: relative; }
.green .ic, .green .caret { color: #fff; }
.dot { position: absolute; right: -4px; top: -4px; width: 10px; height: 10px; border-radius: 3px; background: #0969da; }
.files { margin-top: 21px; border: 1.5px solid #d0d7de; border-radius: 8px; width: 1140px; overflow: hidden; }
.commit { height: 68px; background: #f6f8fa; display: flex; align-items: center; padding-left: 17px; letter-spacing: -.2px; }
.cav { width: 28px; height: 28px; }
.commit b { font-weight: 600; margin: 0 7px 0 16px; width: 100px; letter-spacing: -.4px; }
.row { height: 47.2px; border-top: 1.5px solid #d8dee4; display: grid; grid-template-columns: 41px 327px 1fr; align-items: center; padding: 1px 0 0 20px; letter-spacing: -.12px; }
.row svg { width: 22px; height: 20px; }
.row i, .msg { color: #656d76; }
.row .ic { width: 22px; height: 22px; color: #7a828b; }
.row.hov { background: #f6f8fa; }
.help { margin-top: 21px; height: 79px; background: #ddf4ff; border: 1.5px solid #aad9ff; border-radius: 8px; width: 1140px; display: flex; align-items: center; padding: 2px 0 0 20px; letter-spacing: -.1px; }

.about { margin-left: 30px; width: 376px; padding-top: 32px; color: #59636e; }
.ahead { display: flex; justify-content: space-between; align-items: center; height: 28px; }
h2 { font-size: 20px; font-weight: 600; color: #24292f; letter-spacing: 0; }
.about p { font-size: 20px; font-style: italic; white-space: nowrap; margin: 23px 0 15px; line-height: 28px; height: 28px; letter-spacing: -.1px; }
.aitem { display: flex; align-items: center; gap: 15px; height: 37px; letter-spacing: 0; }
.aitem b { font-weight: 600; }
.rule { height: 1.5px; background: #d8dee4; }
.r1 { margin-top: 62px; } .r2 { margin-top: 158px; } .r3 { margin-top: 157px; }

.popover { position: absolute; left: 713px; top: 294px; width: 509px; height: 476px; background: #fff; border: 1.5px solid #d0d7de; border-radius: 8px; box-shadow: 0 10px 30px rgba(140,149,159,.28); }
.ptabs { display: flex; height: 51px; text-align: center; letter-spacing: -.2px; }
.local { width: 252px; line-height: 54px; }
.spaces { flex: 1; background: #f6f8fa; border-left: 1.5px solid #d0d7de; border-bottom: 1.5px solid #d0d7de; border-radius: 0 8px 0 0; display: flex; align-items: center; justify-content: center; gap: 10px; padding: 3px 2px 0 0; color: #656d76; }
.spaces em { border: 1.5px solid #2da44e; color: #1a7f37; border-radius: 12px; font-size: 14.5px; line-height: 19px; padding: 0 9px; font-weight: 500; }
.clone { height: 218px; border-bottom: 1.5px solid #d8dee4; padding: 0 20px; }
.chead { display: flex; align-items: center; height: 69px; }
.chead b { font-weight: 600; margin-left: 15px; letter-spacing: -.1px; }
.chead .q { margin-left: auto; color: #656d76; }
.chead .ic { width: 21px; height: 21px; }
.proto { display: flex; height: 48px; letter-spacing: -.2px; line-height: 35px; }
.proto b { width: 74px; border-bottom: 3px solid #fd8c73; padding-left: 10px; font-weight: 600; margin-right: 20px; letter-spacing: .3px; }
.proto span { width: 62px; }
.cloneurl { margin-top: 11px; height: 35px; border: 1.5px solid #d0d7de; background: #f6f8fa; border-radius: 8px; font: 14.8px/31px "DejaVu Sans Mono", monospace; padding-left: 15px; color: #24292f; }
.hint { font-size: 15px; color: #656d76; margin-top: 9px; letter-spacing: -.3px; white-space: nowrap; overflow: hidden; }
.pitem { height: 68.3px; border-top: 1.5px solid #d8dee4; display: flex; align-items: center; padding-left: 20px; gap: 11px; }
.clone + .pitem { border-top: 0; }
.pitem b { font-weight: 600; letter-spacing: -.17px; }
.pitem.vs b { letter-spacing: .02px; }

.rtask { height: 48px; background: linear-gradient(90deg, #152532 0, #152736 28%, #22262a 33%, #232425 36%, #1b2b33 40%, #1c2c36 70%, #223540 84%, #1a2b35 94%, #142330 100%); display: flex; align-items: center; color: #fff; }
.rw { width: 21px; height: 21px; margin-left: 17px; }
.rv { width: 21px; height: 20px; margin-left: 40px; color: #d5dbdf; }
.rc { width: 32px; height: 32px; margin-left: 39px; }
.rf { width: 28px; height: 24px; margin-left: 31px; }
.rn { width: 28px; height: 28px; margin-left: 34px; }
.rtray { margin-left: auto; display: flex; align-items: center; }
.rtray .m { width: 15px; height: 21px; }
.rtray .b { width: 22px; height: 17px; margin-left: 14px; }
.rtray .w { width: 17px; height: 17px; margin-left: 13px; margin-top: 3px; }
.rtray .s { width: 22px; height: 19px; margin-left: 10px; }
.rclock { font-size: 15px; line-height: 23px; text-align: center; width: 76px; margin-left: 11px; letter-spacing: -.55px; }
.rnote { width: 22px; height: 21px; margin: 0 28px 0 20px; }

.taskbar { height: 60px; flex: none; background: #eee; display: flex; align-items: center; color: #000; }
.taskbar .w { width: 24px; height: 24px; margin-left: 24px; }
.tsearch { margin-left: 24px; width: 432px; height: 60px; border: 2px solid #cacaca; background: #fff; display: flex; align-items: center; padding-left: 16px; }
.tsearch > svg { width: 25px; height: 25px; fill: none; stroke: #000; stroke-width: 1.4; }
.tsearch > span { font-size: 21.5px; margin-left: 17px; color: #2b2b2b; letter-spacing: .03px; padding-top: 3px; }
.cog { margin: 0 4px 0 auto; width: 108px; height: 48px; background: #909090; border-radius: 9px; display: flex; align-items: center; justify-content: center; gap: 2px; color: #12064a; font: 500 15px/20px "Lato", sans-serif; }
.cog svg { width: 17px; height: 16px; }
.tv { width: 24px; height: 24px; margin-left: 24px; }
.apps { display: flex; margin-left: 34px; gap: 14px; height: 60px; }
.app { width: 61px; border-bottom: 3px solid #0078d7; display: flex; align-items: center; justify-content: center; padding-top: 3px; }
.app svg { width: 36px; height: 36px; }
.app svg.big { width: 38px; height: 38px; }
.noline { width: 62px; padding-right: 2px; border-color: transparent; }
.outlook { border-image: linear-gradient(90deg, #0078d7 80%, #69afe5 80%) 3; border-top: 0; border-left: 0; border-right: 0; }
.outlook svg { width: 40px; height: 38px; }
.tray { display: flex; align-items: center; margin-left: auto; height: 60px; }
.weather { width: 36px; height: 30px; }
.temp { font-size: 20px; margin-left: 12px; width: 44px; letter-spacing: -.5px; color: #222; }
.tray .chev { width: 18px; height: 10px; margin-left: 38px; stroke-width: 1.3; }
.tt { width: 26px; height: 26px; margin-left: 14px; }
.tray .wf { width: 19px; height: 19px; margin-left: 15px; margin-top: 3px; stroke-width: 1.2; }
.tray .sd { width: 24px; height: 20px; margin-left: 12px; stroke-width: 1.2; }
.tray .mc { width: 16px; height: 24px; margin-left: 16px; }
.cl { width: 25px; height: 22px; margin-left: 16px; }
.tray .bt { width: 24px; height: 18px; margin-left: 12px; }
.eng { margin-left: 16px; width: 33px; font-size: 16.5px; letter-spacing: -.5px; color: #222; }
.clock { margin-left: 20px; width: 84px; text-align: center; font-size: 17.5px; line-height: 28px; letter-spacing: -.25px; color: #222; }
.notif { margin-left: 28px; width: 37px; height: 44px; position: relative; }
.notif svg { width: 24px; height: 25px; margin-top: 8px; }
.notif i { position: absolute; left: 10px; top: 20px; width: 27px; height: 25px; border-radius: 50%; background: #dcdcdc; border: 1px solid #777; font-size: 15.5px; font-weight: 600; line-height: 23px; text-align: center; letter-spacing: -.5px; }
.edge { width: 1px; height: 60px; background: #b0b0b0; margin: 0 6px 0 18px; }

.banner { position: absolute; left: 777px; top: 0; width: 366px; height: 40px; background: #049fd9; display: flex; align-items: center; padding-left: 58px; color: #fff; font-size: 16px; letter-spacing: -.48px; }
.banner span { width: 261px; }
.banner svg { width: 38px; height: 26px; margin-top: -3px; }
.mesh { position: absolute; }
.m1 { left: 351px; top: 43px; width: 1037px; height: 77px; }
.m2 { left: 714px; top: 120px; width: 310px; height: 34px; }
.m3 { left: 1007px; top: 561px; width: 449px; height: 454px; }
```
